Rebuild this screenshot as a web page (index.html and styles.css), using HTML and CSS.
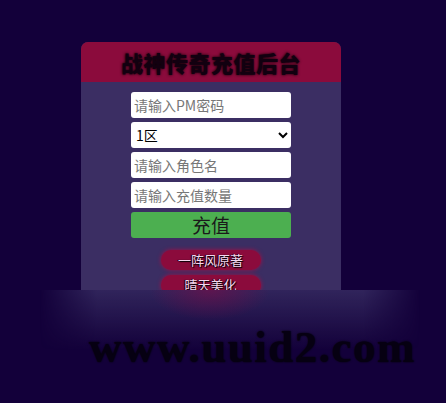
FILE: index.html
```html
<!DOCTYPE html>
<html lang="zh">
<head>
<meta charset="utf-8">
<title>战神传奇充值后台</title>
<link rel="stylesheet" href="styles.css">
</head>
<body>
<div class="card">
  <div class="header"><h1 class="title">战神传奇充值后台</h1></div>
  <form class="form">
    <input class="field" type="text" placeholder="请输入PM密码">
    <select class="field select">
      <option>1区</option>
    </select>
    <input class="field" type="text" placeholder="请输入角色名">
    <input class="field" type="text" placeholder="请输入充值数量">
    <button class="submit" type="button">充值</button>
  </form>
  <div class="links">
    <a class="pill">一阵风原著</a>
    <a class="pill">晴天美化</a>
  </div>
</div>
<div class="fade"></div>
<div class="watermark">www.uuid2.com</div>
</body>
</html>
```
FILE: styles.css
```css
html, body {
  margin: 0;
  padding: 0;
}
body {
  width: 446px;
  height: 403px;
  overflow: hidden;
  background: #13003a;
  font-family: "Noto Sans CJK SC", "Liberation Sans", sans-serif;
  position: relative;
}
.card {
  width: 260px;
  height: 248px;
  margin: 42px 0 0 81px;
  background: #3b2e63;
  border-radius: 7px 7px 0 0;
  overflow: hidden;
}
.header {
  height: 40px;
  background: #8b0b3c;
  display: flex;
  align-items: center;
  justify-content: center;
}
.title {
  margin: 0;
  font-size: 22px;
  font-weight: 900;
  color: #120010;
  text-shadow: 0 0 3px #000;
  letter-spacing: 0.5px;
}
.form {
  width: 160px;
  margin: 10px auto 0;
  display: flex;
  flex-direction: column;
  gap: 4px;
}
.field {
  box-sizing: border-box;
  height: 26px;
  width: 160px;
  border: none;
  border-radius: 3px;
  background: #fff;
  padding: 0 3px;
  font-family: "Noto Sans CJK SC", "Liberation Sans", sans-serif;
  font-size: 14px;
  color: #000;
  outline: none;
}
.field::placeholder {
  color: #777;
}
.select {
  padding: 0 1px;
  font-size: 14px;
}
.submit {
  height: 26px;
  border: none;
  border-radius: 3px;
  background: #4caf50;
  color: #1a1a1a;
  font-family: "Noto Sans CJK SC", "Liberation Sans", sans-serif;
  font-size: 19px;
  line-height: 26px;
  padding: 0;
}
.links {
  margin-top: 12px;
  display: flex;
  flex-direction: column;
  align-items: center;
  gap: 5px;
}
.pill {
  display: block;
  width: 100px;
  height: 20px;
  line-height: 20px;
  border-radius: 10px;
  background: #8b0b3c;
  box-shadow: 0 0 4px #a50e45;
  text-align: center;
  font-size: 13px;
  color: #f4d6ee;
  text-shadow: 1px 1px 1px #000, -1px 0 1px #000;
  margin-left: -1px;
}
.fade {
  position: absolute;
  left: 40px;
  top: 290px;
  width: 380px;
  height: 60px;
  background:
    radial-gradient(ellipse 60px 30px at 170px 0, rgba(130, 10, 70, 0.55), rgba(130, 10, 70, 0) 100%),
    linear-gradient(to bottom, rgba(52, 40, 95, 0.9), rgba(19, 0, 58, 0));
  -webkit-mask-image: linear-gradient(to right, transparent, #000 15%, #000 85%, transparent);
  mask-image: linear-gradient(to right, transparent, #000 15%, #000 85%, transparent);
}
.watermark {
  position: absolute;
  left: 89px;
  top: 321px;
  font-family: "Liberation Serif", serif;
  font-weight: bold;
  font-size: 45px;
  letter-spacing: 1.5px;
  color: #060012;
  text-shadow: 0 0 2px #000;
}
```
